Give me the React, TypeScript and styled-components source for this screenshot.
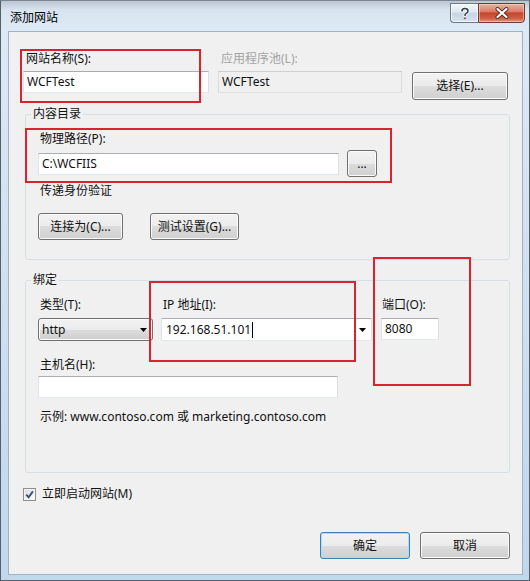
import React from "react";
import styled, { createGlobalStyle } from "styled-components";

const FONT = `"Noto Sans", "Noto Sans CJK SC", sans-serif`;

const Global = createGlobalStyle`
  html, body { margin: 0; padding: 0; background: #ffffff; }
  body { font-family: ${FONT}; font-size: 12px; line-height: 16px; }
  * { box-sizing: border-box; }
`;

const Window = styled.div`
  width: 530px;
  height: 581px;
  display: flex;
  flex-direction: column;
  border: 1px solid #56606b;
  border-top-color: #7c8692;
  background: linear-gradient(
    180deg,
    #bcc5cf 0px,
    #d8e4f0 9px,
    #dde9f5 28px,
    #cfe0f1 50%,
    #c1d7ee 100%
  );
  font-family: ${FONT};
  font-size: 12px;
  line-height: 16px;
  color: #111;
`;

const TitleBar = styled.div`
  height: 30px;
  flex: none;
  display: flex;
  justify-content: space-between;
  align-items: flex-start;
  padding: 0 4px 0 9px;
`;

const Title = styled.div`
  margin-top: 9px;
  color: #000;
`;

const CaptionButtons = styled.div`
  margin-top: 2px;
  display: flex;
`;

const HelpBtn = styled.div`
  width: 28px;
  height: 20px;
  border: 1px solid #6b7886;
  border-right: none;
  border-radius: 0 0 0 4px;
  background: linear-gradient(180deg, #f2f6fa 0%, #dfe8f1 45%, #c7d5e4 50%, #d6e2ef 100%);
  box-shadow: inset 0 0 0 1px rgba(255, 255, 255, 0.7);
  display: flex;
  align-items: center;
  justify-content: center;
`;

const CloseBtn = styled.div`
  width: 47px;
  height: 20px;
  border: 1px solid #6e3b34;
  border-radius: 0 0 4px 0;
  background: linear-gradient(180deg, #eab2a4 0%, #db7d66 42%, #c5452b 50%, #cf5f43 80%, #e39a7d 100%);
  box-shadow: inset 0 0 0 1px rgba(255, 220, 210, 0.5);
  display: flex;
  align-items: center;
  justify-content: center;
`;

const FrameBody = styled.div`
  flex: 1;
  display: flex;
  padding: 0 7px 5px 7px;
`;

const Client = styled.div`
  flex: 1;
  position: relative;
  background: #f0f0f0;
  border: 1px solid #9fb2c6;
  padding: 19px 12px 0 14px;
  display: flex;
  flex-direction: column;
`;

const TopGrid = styled.div`
  display: grid;
  grid-template-columns: 186px 184px 97px;
  column-gap: 9px;
  row-gap: 4px;
  align-items: start;
`;

const Label = styled.div<{ $indent?: number; $disabled?: boolean; $top?: number }>`
  margin-left: ${(p) => p.$indent ?? 2}px;
  margin-top: ${(p) => p.$top ?? 0}px;
  color: ${(p) => (p.$disabled ? "#a3a3a3" : "#111")};
  white-space: nowrap;
  line-height: 16px;
`;

const TextBox = styled.div<{ $w?: number; $h?: number; $ro?: boolean }>`
  width: ${(p) => (p.$w ? `${p.$w}px` : "100%")};
  height: ${(p) => p.$h ?? 22}px;
  border: 1px solid;
  border-color: ${(p) =>
    p.$ro ? "#cfcfcf #dcdcdc #e2e2e2 #dcdcdc" : "#abadb3 #dbdfe6 #e3e9ef #e2e3ea"};
  background: ${(p) => (p.$ro ? "#f0f0f0" : "#ffffff")};
  padding: 0 3px;
  display: flex;
  align-items: center;
  white-space: nowrap;
`;

const ComboBox = styled(TextBox)`
  padding: 0 5px 0 4px;
  justify-content: space-between;
`;

const ComboText = styled.span`
  display: flex;
  align-items: center;
`;

const Caret = styled.span`
  width: 1px;
  height: 16px;
  background: #000;
  margin-left: 1px;
`;

const Button = styled.button<{ $w: number; $h?: number; $default?: boolean; $top?: number }>`
  width: ${(p) => p.$w}px;
  height: ${(p) => p.$h ?? 27}px;
  margin-top: ${(p) => p.$top ?? 0}px;
  justify-self: end;
  padding: 0;
  font-family: ${FONT};
  font-size: 12px;
  line-height: 16px;
  color: #111;
  border: 1px solid ${(p) => (p.$default ? "#3c7fb1" : "#707070")};
  border-radius: 3px;
  background: linear-gradient(180deg, #f2f2f2 0%, #ebebeb 50%, #dddddd 50%, #cfcfcf 100%);
  box-shadow: inset 0 0 0 1px ${(p) => (p.$default ? "#9fe2fa" : "#fbfbfb")};
  display: flex;
  align-items: center;
  justify-content: center;
`;

const Group = styled.fieldset<{ $top: number }>`
  margin: ${(p) => p.$top}px 0 0 2px;
  width: 485px;
  padding: 0;
  border: 1px solid #d5dfe5;
  border-radius: 3px;
  min-width: 0;
`;

const Legend = styled.legend`
  margin-left: 5px;
  padding: 0 2px;
  line-height: 16px;
  color: #111;
`;

const GroupBody = styled.div<{ $bottom: number }>`
  padding: 9px 0 ${(p) => p.$bottom}px 12px;
  display: flex;
  flex-direction: column;
`;

const Row = styled.div<{ $top?: number; $gap?: number }>`
  display: flex;
  align-items: center;
  margin-top: ${(p) => p.$top ?? 0}px;
  gap: ${(p) => p.$gap ?? 0}px;
`;

const Stack = styled.div<{ $top?: number; $gap?: number }>`
  display: flex;
  flex-direction: column;
  margin-top: ${(p) => p.$top ?? 0}px;
  gap: ${(p) => p.$gap ?? 0}px;
`;

const BindGrid = styled.div`
  display: grid;
  grid-template-columns: 115px 211px 58px;
  column-gap: 8px;
  row-gap: 5px;
  align-items: start;
`;

const PortBox = styled(TextBox)`
  margin-left: 1px;
`;

const Select = styled.div`
  height: 23px;
  border: 1px solid #707070;
  border-radius: 3px;
  background: linear-gradient(180deg, #f2f2f2 0%, #ebebeb 50%, #dddddd 50%, #cfcfcf 100%);
  box-shadow: inset 0 0 0 1px #fbfbfb;
  display: flex;
  align-items: center;
  justify-content: space-between;
  padding: 0 5px 0 3px;
`;

const CheckRow = styled.div`
  display: flex;
  align-items: center;
  gap: 6px;
  margin-top: 13px;
`;

const CheckBox = styled.span`
  width: 13px;
  height: 13px;
  border: 1px solid #8e8f8f;
  background: linear-gradient(135deg, #d8d8d8 0%, #f6f6f6 70%, #ffffff 100%);
  box-shadow: inset 0 0 0 1px #f4f4f4;
  display: flex;
  align-items: center;
  justify-content: center;
`;

const Footer = styled.div`
  margin-top: 30px;
  display: flex;
  justify-content: flex-end;
  gap: 10px;
`;

const Annotation = styled.div<{ $x: number; $y: number; $w: number; $h: number }>`
  position: absolute;
  left: ${(p) => p.$x}px;
  top: ${(p) => p.$y}px;
  width: ${(p) => p.$w}px;
  height: ${(p) => p.$h}px;
  border: 2px solid #d9232f;
  pointer-events: none;
`;

const Arrow = () => (
  <svg width="7" height="4" viewBox="0 0 7 4">
    <polygon points="0,0 7,0 3.5,4" fill="#000" />
  </svg>
);

const annotations = [
  { x: 11, y: 17, w: 181, h: 54 },
  { x: 16, y: 96, w: 367, h: 55 },
  { x: 140, y: 249, w: 207, h: 81 },
  { x: 364, y: 225, w: 98, h: 129 },
];

export default function App() {
  return (
    <>
      <Global />
      <Window>
        <TitleBar>
          <Title>添加网站</Title>
          <CaptionButtons>
            <HelpBtn>
              <svg width="10" height="13" viewBox="0 0 10 13">
                <path
                  d="M2 4 Q2 1.5 5 1.5 Q8 1.5 8 4 Q8 5.5 6.2 6.4 Q5 7 5 8.5"
                  fill="none"
                  stroke="#fff"
                  strokeWidth="3.2"
                  strokeLinecap="round"
                />
                <path
                  d="M2 4 Q2 1.5 5 1.5 Q8 1.5 8 4 Q8 5.5 6.2 6.4 Q5 7 5 8.5"
                  fill="none"
                  stroke="#33404f"
                  strokeWidth="1.6"
                  strokeLinecap="round"
                />
                <circle cx="5" cy="11.2" r="1.3" fill="#33404f" stroke="#fff" strokeWidth="0.6" />
              </svg>
            </HelpBtn>
            <CloseBtn>
              <svg width="14" height="12" viewBox="0 0 14 12">
                <path d="M2.5 2 L11.5 10 M11.5 2 L2.5 10" stroke="#5a2a22" strokeWidth="4" strokeLinecap="round" />
                <path d="M2.5 2 L11.5 10 M11.5 2 L2.5 10" stroke="#ffffff" strokeWidth="2.2" strokeLinecap="round" />
              </svg>
            </CloseBtn>
          </CaptionButtons>
        </TitleBar>
        <FrameBody>
          <Client>
            <TopGrid>
              <Label $indent={3}>网站名称(S):</Label>
              <Label $indent={3} $disabled>
                应用程序池(L):
              </Label>
              <div />
              <TextBox>WCFTest</TextBox>
              <TextBox $ro>WCFTest</TextBox>
              <Button $w={96} $h={28} $top={1}>
                选择(E)...
              </Button>
            </TopGrid>

            <Group $top={6}>
              <Legend>内容目录</Legend>
              <GroupBody $bottom={19}>
                <Label>物理路径(P):</Label>
                <Row $top={3} $gap={8}>
                  <TextBox $w={301}>C:\WCFIIS</TextBox>
                  <Button $w={30}>...</Button>
                </Row>
                <Label $top={6}>传递身份验证</Label>
                <Row $top={14} $gap={27}>
                  <Button $w={85}>连接为(C)...</Button>
                  <Button $w={89}>测试设置(G)...</Button>
                </Row>
              </GroupBody>
            </Group>

            <Group $top={12}>
              <Legend>绑定</Legend>
              <GroupBody $bottom={47}>
                <BindGrid>
                  <Label>类型(T):</Label>
                  <Label>IP 地址(I):</Label>
                  <Label>端口(O):</Label>
                  <Select>
                    <span>http</span>
                    <Arrow />
                  </Select>
                  <ComboBox $h={23}>
                    <ComboText>
                      192.168.51.101
                      <Caret />
                    </ComboText>
                    <Arrow />
                  </ComboBox>
                  <PortBox>8080</PortBox>
                </BindGrid>
                <Stack $top={16} $gap={3}>
                  <Label>主机名(H):</Label>
                  <TextBox $w={300} />
                </Stack>
                <Label $top={11}>示例: www.contoso.com 或 marketing.contoso.com</Label>
              </GroupBody>
            </Group>

            <CheckRow>
              <CheckBox>
                <svg width="9" height="9" viewBox="0 0 9 9">
                  <path
                    d="M1.2 4.6 L3.6 7.2 L7.9 1.4"
                    fill="none"
                    stroke="#34508a"
                    strokeWidth="1.9"
                  />
                </svg>
              </CheckBox>
              <span>立即启动网站(M)</span>
            </CheckRow>

            <Footer>
              <Button $w={90} $default>
                确定
              </Button>
              <Button $w={90}>取消</Button>
            </Footer>

            {annotations.map((a, i) => (
              <Annotation key={i} $x={a.x} $y={a.y} $w={a.w} $h={a.h} />
            ))}
          </Client>
        </FrameBody>
      </Window>
    </>
  );
}
